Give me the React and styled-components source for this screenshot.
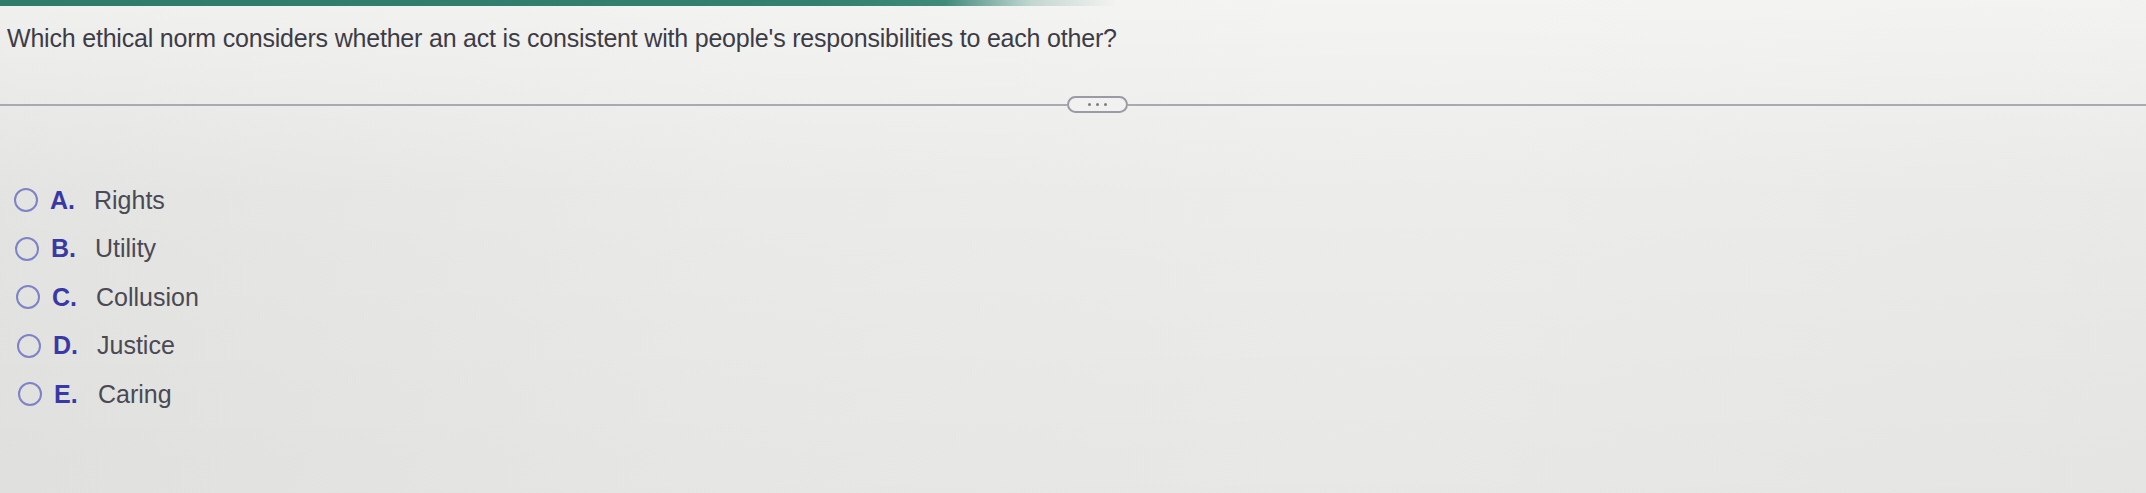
import React from "react";
import styled, { createGlobalStyle } from "styled-components";

const Global = createGlobalStyle`
  html, body { margin: 0; padding: 0; }
  body {
    width: 2146px;
    height: 493px;
    overflow: hidden;
    font-family: "Liberation Sans", Arial, sans-serif;
    background: linear-gradient(100deg, #e3e3e1 0%, #eaeae8 35%, #ececea 65%, #e9e9e7 100%);
  }
`;

const Page = styled.div`
  width: 2146px;
  height: 493px;
  display: flex;
  flex-direction: column;
  background: linear-gradient(180deg, rgba(250,250,248,0.55) 0%, rgba(250,250,248,0) 40%, rgba(0,0,0,0.02) 100%);
`;

const TopBar = styled.div`
  height: 6px;
  background: linear-gradient(90deg, #2f7b6c 0%, #33806f 38%, #3f8a7a 44%, rgba(120,170,160,0.4) 48%, rgba(200,215,210,0) 52%);
`;

const Question = styled.div`
  margin: 18px 0 0 7px;
  font-size: 25px;
  line-height: 29px;
  color: #3d3c46;
  letter-spacing: -0.2px;
  white-space: nowrap;
`;

const DividerRow = styled.div`
  margin-top: 43px;
  height: 17px;
  display: flex;
  align-items: center;
`;

const Line = styled.div`
  height: 2px;
  background: #a9a9b3;
  flex: ${(p) => (p.$grow ? "1" : "none")};
  width: ${(p) => (p.$grow ? "auto" : `${p.$w}px`)};
`;

const Pill = styled.button`
  width: 61px;
  height: 17px;
  box-sizing: border-box;
  border: 2px solid #9b9ba6;
  border-radius: 9px;
  background: #f1f1ef;
  padding: 0;
  display: flex;
  align-items: center;
  justify-content: center;
  gap: 5px;
`;

const Dot = styled.span`
  width: 3px;
  height: 3px;
  border-radius: 50%;
  background: #7d7d88;
`;

const Options = styled.div`
  margin-top: 63px;
  display: flex;
  flex-direction: column;
`;

const Row = styled.label`
  height: 48.5px;
  display: flex;
  align-items: center;
  padding-left: ${(p) => 14 + p.$shift}px;
`;

const Radio = styled.span`
  width: 24px;
  height: 24px;
  box-sizing: border-box;
  border: 2.5px solid #7f83c6;
  border-radius: 50%;
  margin-right: 12px;
  flex: none;
`;

const Letter = styled.span`
  width: 44px;
  font-size: 25px;
  font-weight: bold;
  color: #3838a6;
  flex: none;
`;

const Text = styled.span`
  font-size: 25px;
  color: #4a4954;
`;

const options = [
  ["A.", "Rights"],
  ["B.", "Utility"],
  ["C.", "Collusion"],
  ["D.", "Justice"],
  ["E.", "Caring"],
];

export default function App() {
  return (
    <>
      <Global />
      <Page>
        <TopBar />
        <Question>
          Which ethical norm considers whether an act is consistent with people's responsibilities to each other?
        </Question>
        <DividerRow>
          <Line $w={1067} />
          <Pill aria-label="more">
            <Dot />
            <Dot />
            <Dot />
          </Pill>
          <Line $grow />
        </DividerRow>
        <Options>
          {options.map(([l, t], i) => (
            <Row key={l} $shift={i}>
              <Radio />
              <Letter>{l}</Letter>
              <Text>{t}</Text>
            </Row>
          ))}
        </Options>
      </Page>
    </>
  );
}
